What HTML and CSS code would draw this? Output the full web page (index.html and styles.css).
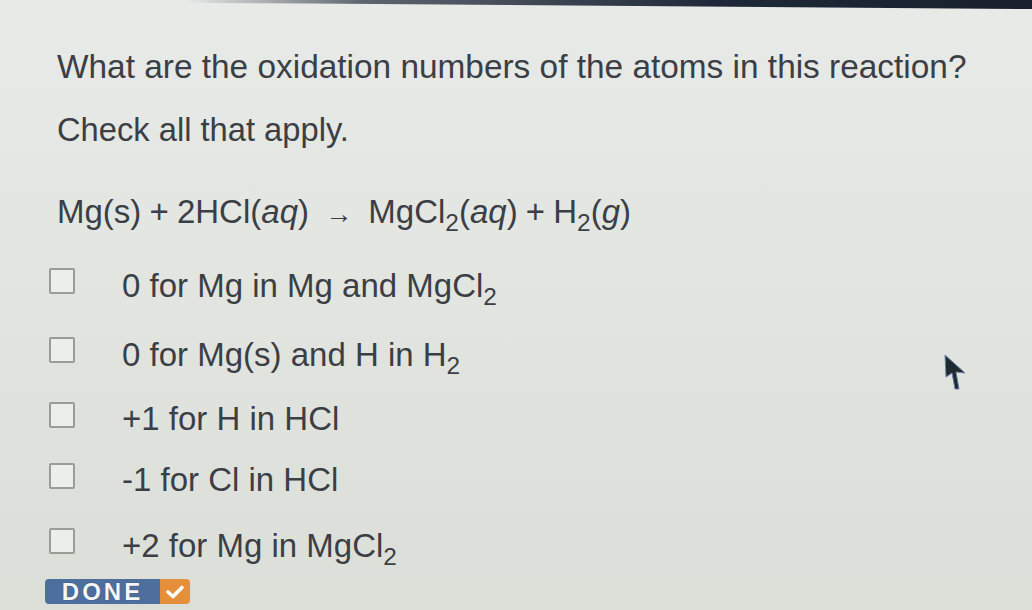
FILE: index.html
```html
<!DOCTYPE html>
<html lang="en">
<head>
<meta charset="utf-8">
<title>Oxidation numbers</title>
<link rel="stylesheet" href="styles.css">
</head>
<body>
<div class="bezel"></div>
<main class="question">
  <h1 class="title">What are the oxidation numbers of the atoms in this reaction?</h1>
  <p class="hint">Check all that apply.</p>
  <p class="equation">Mg(s) + 2HCl(<i>aq</i>) <span class="arrow">→</span> MgCl<span class="sub">2</span>(<i>aq</i>) + H<span class="sub">2</span>(<i>g</i>)</p>
  <ul class="options">
    <li class="opt r1"><span class="box"></span><span class="label">0 for Mg in Mg and MgCl<span class="sub">2</span></span></li>
    <li class="opt r2"><span class="box"></span><span class="label">0 for Mg(s) and H in H<span class="sub">2</span></span></li>
    <li class="opt r3"><span class="box"></span><span class="label">+1 for H in HCl</span></li>
    <li class="opt r4"><span class="box"></span><span class="label">-1 for Cl in HCl</span></li>
    <li class="opt r5"><span class="box"></span><span class="label">+2 for Mg in MgCl<span class="sub">2</span></span></li>
  </ul>
  <button class="done"><span class="done-text">DONE</span><span class="done-check"><svg width="20" height="16" viewBox="0 0 20 16"><path d="M3 8 L8 12.5 L17 3.5" fill="none" stroke="#fff" stroke-width="3.6" stroke-linecap="round" stroke-linejoin="round"/></svg></span></button>
</main>
<svg class="cursor" width="26" height="40" viewBox="0 0 26 40"><path d="M2 2 L22 20 L13 19 L16 36 L12 36 L9 20 L3 24 Z" fill="#1f2a30" stroke="#6a7fa8" stroke-width="1"/></svg>
</body>
</html>
```

FILE: styles.css
```css
html, body {
  margin: 0;
  padding: 0;
  width: 1032px;
  height: 610px;
  overflow: hidden;
}
body {
  background: linear-gradient(180deg, #e7eae7 0%, #e2e5e0 45%, #dcdfd8 100%);
  font-family: "Liberation Sans", Arial, sans-serif;
  color: #3b3f45;
  position: relative;
}
.bezel {
  position: absolute;
  left: 0;
  top: 0;
  width: 1032px;
  height: 9px;
  background: linear-gradient(90deg, rgba(30,40,55,0) 0%, rgba(30,40,55,0) 18%, rgba(35,45,60,0.7) 35%, #1e2838 70%, #18202c 100%);
  clip-path: polygon(0 0, 100% 0, 100% 100%, 30% 40%, 0 20%);
}
.question {
  padding: 50px 0 0 57px;
}
.title {
  margin: 0;
  font-size: 33.4px;
  line-height: 33px;
  font-weight: normal;
}
.hint {
  margin: 31px 0 0;
  font-size: 32.7px;
  line-height: 32px;
}
.equation {
  margin: 50px 0 0;
  font-size: 33px;
  line-height: 32px;
  word-spacing: -1px;
}
.equation i {
  font-style: italic;
}
.arrow {
  font-size: 27px;
  margin: 0 8px;
}
.sub {
  font-size: 0.74em;
  line-height: 0;
  vertical-align: -0.32em;
}
.options {
  list-style: none;
  margin: 17px 0 0 -8px;
  padding: 0;
}
.opt {
  display: flex;
  align-items: center;
  height: 61px;
}
.opt.r1 { height: 68px; }
.opt.r2 { height: 70px; }
.opt.r3 { height: 59px; }
.opt.r4 { height: 63px; }
.opt.r5 { height: 68px; }
.box {
  box-sizing: border-box;
  width: 26px;
  height: 26px;
  border: 2px solid #999c98;
  border-radius: 2px;
  background: #eceee9;
  flex: none;
}
.label {
  margin-left: 47px;
  margin-top: 8px;
  font-size: 33px;
  line-height: 31px;
  white-space: nowrap;
}
.done {
  display: flex;
  margin: 4px 0 0 -12px;
  padding: 0;
  border: 0;
  border-radius: 4px;
  overflow: hidden;
  height: 25px;
  background: transparent;
  font-family: "Liberation Sans", Arial, sans-serif;
}
.done-text {
  width: 115px;
  background: #4e6e9e;
  color: #f4f6f8;
  font-size: 24px;
  font-weight: bold;
  line-height: 25px;
  letter-spacing: 3px;
  text-align: center;
  text-shadow: 0 0 1px #2a3a55;
}
.done-check {
  width: 30px;
  background: #e68f3a;
  display: flex;
  align-items: center;
  justify-content: center;
}
.cursor {
  position: absolute;
  left: 943px;
  top: 353px;
}
```
